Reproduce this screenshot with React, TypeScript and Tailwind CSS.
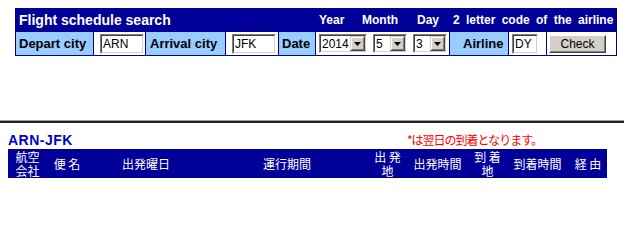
import React from "react";

function TextBox({ value, w }: { value: string; w: string }) {
  return (
    <div className={`${w} h-[20px] border border-t-[#808080] border-l-[#808080] border-b-white border-r-white font-normal`}>
      <div className="h-full w-full border border-t-[#404040] border-l-[#404040] border-b-[#d4d0c8] border-r-[#d4d0c8] bg-white flex items-center pl-[1px] text-[12px] leading-none text-black font-normal">
        {value}
      </div>
    </div>
  );
}

function Select({ value, w }: { value: string; w: string }) {
  return (
    <div className={`${w} h-[19px] border border-t-[#808080] border-l-[#808080] border-b-white border-r-white`}>
      <div className="h-full w-full border border-t-[#404040] border-l-[#404040] border-b-[#d4d0c8] border-r-[#d4d0c8] bg-white flex">
        <div className="flex-1 flex items-center pl-[1px] text-[12px] leading-none text-black">{value}</div>
        <div className="w-[15px] h-full border border-t-[#d4d0c8] border-l-[#d4d0c8] border-b-[#404040] border-r-[#404040]">
          <div className="w-full h-full bg-[#d4d0c8] border border-t-white border-l-white border-b-[#808080] border-r-[#808080] flex items-center justify-center">
            <svg width="7" height="4" viewBox="0 0 7 4">
              <path d="M0 0H7L3.5 4Z" fill="#000" />
            </svg>
          </div>
        </div>
      </div>
    </div>
  );
}

export default function App() {
  return (
    <div className="w-[624px] h-[242px] bg-white overflow-hidden font-['Liberation_Sans',Arial,sans-serif]">
      <div className="pt-[8px] pl-[15px]">
        <div className="w-[602px] bg-[#000099] px-[1px] pb-[1px] flex flex-col gap-[1px]">
          <div className="h-[23px] flex items-center text-white font-bold">
            <span className="w-[303px] pl-[3px] text-[14px] leading-none">Flight schedule search</span>
            <span className="w-[43px] text-[12px] leading-none">Year</span>
            <span className="w-[55px] text-[12px] leading-none">Month</span>
            <span className="w-[36px] text-[12px] leading-none">Day</span>
            <span className="text-[12px] leading-none [word-spacing:3px]">2 letter code of the airline</span>
          </div>
          <div className="h-[23px] flex gap-[1px] text-[13px] text-black">
            <div className="w-[77px] bg-[#99ccff] flex items-center pl-[3px] font-bold">Depart city</div>
            <div className="w-[51px] bg-white flex items-center pl-[6px]">
              <TextBox value="ARN" w="w-[44px]" />
            </div>
            <div className="w-[79px] bg-[#99ccff] flex items-center pl-[4px] font-bold">Arrival city</div>
            <div className="w-[52px] bg-white flex items-center pl-[6px]">
              <TextBox value="JFK" w="w-[44px]" />
            </div>
            <div className="w-[36px] bg-[#99ccff] flex items-center pl-[3px] font-bold">Date</div>
            <div className="w-[133px] bg-white flex items-center pl-[3px] gap-[6px]">
              <Select value="2014" w="w-[48px]" />
              <Select value="5" w="w-[34px]" />
              <Select value="3" w="w-[34px]" />
            </div>
            <div className="w-[58px] bg-[#99ccff] flex items-center pl-[13px] font-bold">Airline</div>
            <div className="w-[37px] bg-white flex items-center pl-[3px]">
              <TextBox value="DY" w="w-[26px]" />
            </div>
            <div className="w-[69px] bg-white flex items-center pl-[2px]">
              <div className="w-[57px] h-[18px] border border-t-white border-l-white border-b-[#404040] border-r-[#404040]">
                <div className="w-full h-full bg-[#d4d0c8] border border-t-[#d4d0c8] border-l-[#d4d0c8] border-b-[#808080] border-r-[#808080] flex items-center justify-center text-[12px] leading-none text-black">
                  Check
                </div>
              </div>
            </div>
          </div>
        </div>
      </div>

      <div className="mt-[64px] h-[3px] border-t border-t-[#a0a0a0] bg-[#202020]" />

      <div className="mt-[9px] pl-[8px] h-[16px] flex items-center">
        <span className="w-[399px] text-[14px] font-bold leading-[16px] tracking-[0.5px] text-[#0000cc]">ARN-JFK</span>
        <span className="text-[12px] leading-[16px] tracking-[-1px] text-[#ff0000] font-['Noto_Sans_CJK_JP',sans-serif]">*は翌日の到着となります。</span>
      </div>

      <div className="mt-[1px] ml-[8px] w-[599px] h-[29px] bg-[#000099] flex text-white text-[12px] leading-[14px] font-['Noto_Sans_CJK_JP',sans-serif]">
        <div className="w-[39px] flex flex-col items-center justify-center"><span>航空</span><span>会社</span></div>
        <div className="w-[40px] flex items-center justify-center">便 名</div>
        <div className="w-[118px] flex items-center justify-center">出発曜日</div>
        <div className="w-[164px] flex items-center justify-center">運行期間</div>
        <div className="w-[37px] flex flex-col items-center justify-center"><span>出 発</span><span>地</span></div>
        <div className="w-[63px] flex items-center justify-center">出発時間</div>
        <div className="w-[37px] flex flex-col items-center justify-center"><span>到 着</span><span>地</span></div>
        <div className="w-[63px] flex items-center justify-center">到着時間</div>
        <div className="w-[38px] flex items-center justify-center">経 由</div>
      </div>
    </div>
  );
}
